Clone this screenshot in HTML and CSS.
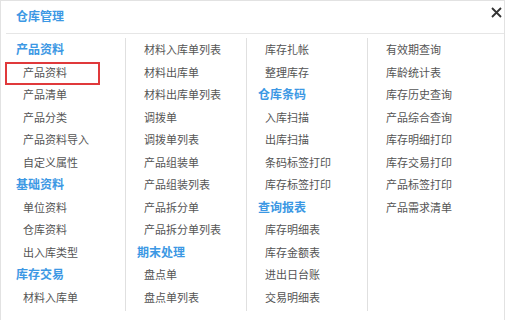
FILE: index.html
```html
<!DOCTYPE html>
<html lang="zh-CN">
<head>
    <meta charset="UTF-8">
    <meta name="viewport" content="width=device-width, initial-scale=1.0">
    <title>仓库管理</title>
    <link rel="stylesheet" href="styles.css">
</head>
<body>
    <div class="dialog">
        <div class="dialog-head">
            <h3>仓库管理</h3>
            <span class="close">
                <svg width="11" height="11" viewBox="0 0 11 11"><path d="M1 1L10 10M10 1L1 10" stroke="#333" stroke-width="1.8"/></svg>
            </span>
        </div>
        <div class="menu">
            <div class="col">
                <div class="group">产品资料</div>
                <div class="item marked">产品资料</div>
                <div class="item">产品清单</div>
                <div class="item">产品分类</div>
                <div class="item">产品资料导入</div>
                <div class="item">自定义属性</div>
                <div class="group">基础资料</div>
                <div class="item">单位资料</div>
                <div class="item">仓库资料</div>
                <div class="item">出入库类型</div>
                <div class="group">库存交易</div>
                <div class="item">材料入库单</div>
            </div>
            <div class="col">
                <div class="item">材料入库单列表</div>
                <div class="item">材料出库单</div>
                <div class="item">材料出库单列表</div>
                <div class="item">调拨单</div>
                <div class="item">调拨单列表</div>
                <div class="item">产品组装单</div>
                <div class="item">产品组装列表</div>
                <div class="item">产品拆分单</div>
                <div class="item">产品拆分单列表</div>
                <div class="group">期末处理</div>
                <div class="item">盘点单</div>
                <div class="item">盘点单列表</div>
            </div>
            <div class="col">
                <div class="item">库存扎帐</div>
                <div class="item">整理库存</div>
                <div class="group">仓库条码</div>
                <div class="item">入库扫描</div>
                <div class="item">出库扫描</div>
                <div class="item">条码标签打印</div>
                <div class="item">库存标签打印</div>
                <div class="group">查询报表</div>
                <div class="item">库存明细表</div>
                <div class="item">库存金额表</div>
                <div class="item">进出日台账</div>
                <div class="item">交易明细表</div>
            </div>
            <div class="col last">
                <div class="item">有效期查询</div>
                <div class="item">库龄统计表</div>
                <div class="item">库存历史查询</div>
                <div class="item">产品综合查询</div>
                <div class="item">库存明细打印</div>
                <div class="item">库存交易打印</div>
                <div class="item">产品标签打印</div>
                <div class="item">产品需求清单</div>
            </div>
        </div>
    </div>
</body>
</html>
```

FILE: styles.css
```css
body {
    font-family: "Noto Sans CJK SC", "Noto Sans", sans-serif;
    background-color: #fff;
    margin: 0;
    padding: 0;
}

.dialog {
    width: 503px;
    height: 319px;
    border: 1px solid #e2e2e2;
    border-bottom: none;
    overflow: hidden;
}

.dialog-head {
    height: 32px;
    display: flex;
    align-items: center;
    justify-content: space-between;
    margin-left: 5px;
    border-bottom: 1px solid #e6e6e6;
}

.dialog-head h3 {
    margin: 0 0 0 10px;
    font-size: 12px;
    font-weight: bold;
    color: #3c98e4;
    line-height: 32px;
    position: relative;
    top: -1px;
}

.close {
    display: flex;
    margin-right: 2px;
    position: relative;
    top: -5px;
}

.menu {
    display: flex;
    padding-top: 4px;
    margin-left: 4px;
}

.col {
    width: 109px;
    padding-left: 11px;
    padding-bottom: 3px;
    border-right: 1px solid #e0e0e0;
}

.col.last {
    border-right: none;
}

.group {
    height: 22.5px;
    line-height: 22.5px;
    font-size: 12px;
    font-weight: bold;
    color: #3c98e4;
}

.item {
    height: 22.5px;
    line-height: 22.5px;
    font-size: 11px;
    color: #555;
    padding-left: 7px;
    white-space: nowrap;
}

.marked {
    position: relative;
}

/* red highlight box */
.marked::after {
    content: "";
    position: absolute;
    left: -11px;
    top: 1px;
    width: 91px;
    height: 19px;
    border: 2px solid #e0393b;
}
```
